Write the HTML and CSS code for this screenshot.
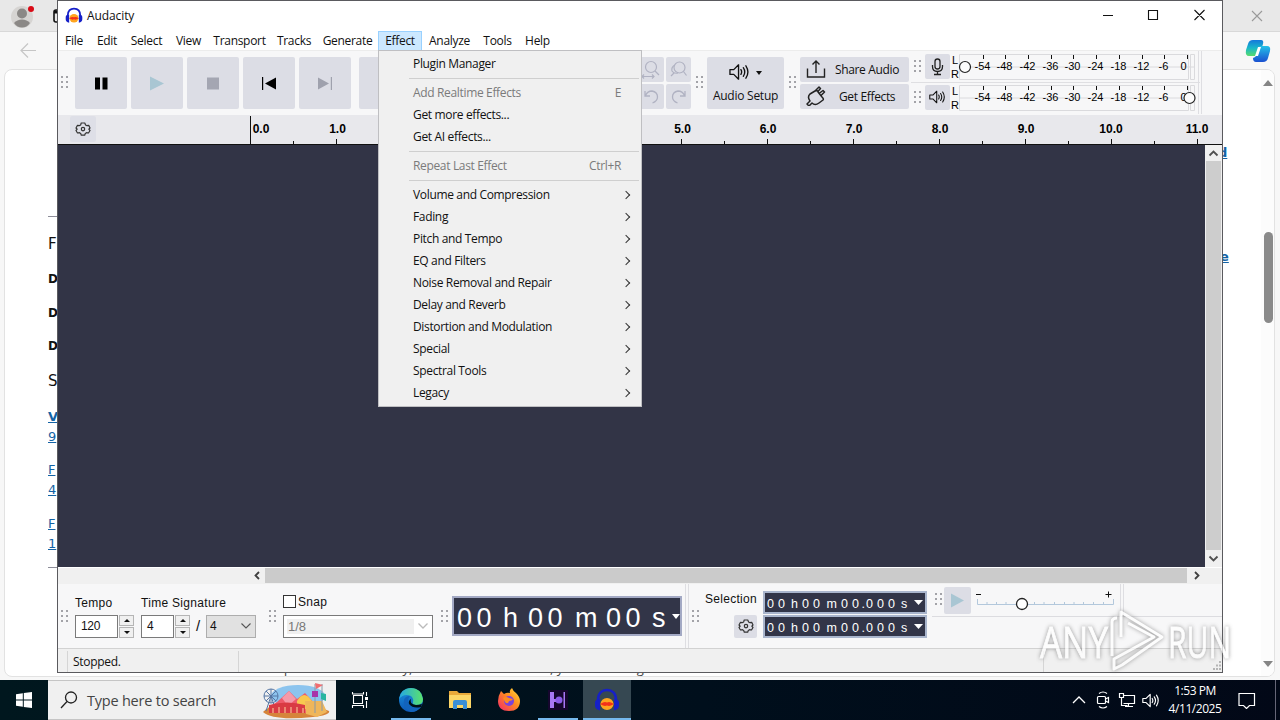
FILE: index.html
```html
<!DOCTYPE html>
<html lang="en">
<head>
<meta charset="utf-8">
<title>Audacity</title>
<link rel="stylesheet" href="styles.css">
</head>
<body>
<svg class="defs" width="0" height="0">
  <defs>
    <symbol id="grip" viewBox="0 0 8 13"><path d="M0 0h2v2H0zM5 0h2v2H5zM0 5h2v2H0zM5 5h2v2H5zM0 10h2v2H0zM5 10h2v2H5z" fill="#a3a3a8"/></symbol>
    <symbol id="gear" viewBox="0 0 16 16"><path d="M6.200 2h3.600l.7 1.900 1.200.7 2-.3L15 7l-1.200 1.200L15 9.500l-1.500 2.500-2-.3-1.200.7-.6 1.800H6.300l-.6-1.800-1.200-.7-2 .3L1 9.500l1.200-1.300L1 7l1.500-2.700 2 .3 1.200-.7z" fill="none" stroke="#333" stroke-width="1.200" stroke-linejoin="round"/><circle cx="8" cy="8.100" r="1.700" fill="none" stroke="#333" stroke-width="1.200"/></symbol>
    <symbol id="speaker" viewBox="0 0 22 18"><path d="M1 6.500h4l5-5v15l-5-5H1z" fill="none" stroke="currentColor" stroke-width="1.400" stroke-linejoin="round"/><path d="M12.500 6.500q1.500 2.500 0 5M15 4.500q3 4.500 0 9M17.700 2.500q4.200 6.500 0 13" fill="none" stroke="currentColor" stroke-width="1.400" stroke-linecap="round"/></symbol>
    <symbol id="phones" viewBox="0 0 26 24"><ellipse cx="13" cy="16" rx="6.500" ry="6" fill="#ffa51f"/><path d="M6 16l3-1.500 2-.5 2 .5 2-.5 2 .5 3 1.500-3 1.500-2 .5-2-.5-2 .5-2-.5z" fill="#f4301b"/><path d="M4 17V12C4 5 8 2 13 2s9 3 9 10v5" fill="none" stroke="#1620c8" stroke-width="2.600"/><path d="M1 14.500q0-3.500 5-3.500v11.500q-5-1-5-5zM25 14.500q0-3.500-5-3.500v11.500q5-1 5-5z" fill="#1620c8"/></symbol>
    <linearGradient id="edgeA" x1="0" y1="0" x2="1" y2="0"><stop offset="0" stop-color="#24a6e4"/><stop offset="1" stop-color="#5be36c"/></linearGradient>
    <linearGradient id="edgeB" x1="0" y1="0" x2="0" y2="1"><stop offset="0" stop-color="#1b94dc"/><stop offset="1" stop-color="#0c58b8"/></linearGradient>
    <linearGradient id="fox" x1="1" y1="0" x2="0" y2="1"><stop offset="0" stop-color="#ffe23c"/><stop offset=".45" stop-color="#ff8a20"/><stop offset="1" stop-color="#f4266c"/></linearGradient>
    <linearGradient id="copA" x1="0" y1="0" x2="0" y2="1"><stop offset="0" stop-color="#1478dc"/><stop offset=".5" stop-color="#19b7c9"/><stop offset="1" stop-color="#58dc6c"/></linearGradient>
    <linearGradient id="copB" x1="0" y1="0" x2="0" y2="1"><stop offset="0" stop-color="#24c1e8"/><stop offset="1" stop-color="#1a50d0"/></linearGradient>
  </defs>
</svg>
<div class="desktop">

  <section class="browser">
    <header class="tabstrip">
      <svg class="avatar" width="26" height="26" viewBox="0 0 26 26"><circle cx="11" cy="14" r="11" fill="#d6d4d2"/><circle cx="11" cy="10.500" r="5" fill="#8b8886"/><path d="M3 20q3-3.500 8-3.500t8 3.500q-3 4.500-8 4.500T3 20z" fill="#8b8886"/><circle cx="20" cy="6" r="3" fill="#d90b17"/></svg>
      <svg class="tabicon" width="14" height="14" viewBox="0 0 14 14"><rect x="1" y="1" width="12" height="12" rx="2" fill="none" stroke="#111" stroke-width="1.600"/><path d="M1 3h12" stroke="#111" stroke-width="3"/></svg>
      <svg class="tabclose" width="12" height="12" viewBox="0 0 12 12"><path d="M1 1l10 10M11 1L1 11" stroke="#9a9a9a" stroke-width="1.100"/></svg>
    </header>
    <div class="navbar">
      <svg width="18" height="16" viewBox="0 0 18 16"><path d="M16 7.500H1M8 .5l-7 7 7 7" fill="none" stroke="#c6c6c6" stroke-width="1.200"/></svg>
      <svg class="copilot" width="26" height="24" viewBox="0 0 26 24"><path d="M8 1h8q3 0 2 4l-3 9q-1 3-4 3H4q-4 0-3-6l2-6q1-4 5-4z" fill="url(#copA)"/><path d="M15 7h7q4 0 3 5l-2 7q-1 4-5 4h-7q-3 0-3-4 3-1 4-4l2-6q.5-2 1-2z" fill="url(#copB)"/><path d="M13 8h3l-3 9h-3z" fill="#fff"/></svg>
    </div>
    <div class="page">
      <div class="article">
        <hr>
        <p class="h f1">F</p><p class="d">D</p><p class="d">D</p><p class="d">D</p><p class="h s1">S</p>
        <a class="bold">V</a><a>9</a><a class="gap">F</a><a>4</a><a class="gap">F</a><a>1</a>
        <hr class="end">
      </div>
      <div class="aside"><a>d</a><a>e</a></div>
      <div class="scroll"><i class="up"></i><i class="thumb"></i><i class="down"></i></div>
      <p class="cut">offline or quicker automatically, wisdeoutlid installs on, you're missing und</p>
    </div>
  </section>

  <section class="window">
    <header class="title">
      <svg width="18" height="17"><use href="#phones"/></svg>
      <span>Audacity</span>
      <svg class="controls" width="104" height="14" viewBox="0 0 104 14"><path d="M0 7.500h10M45.500 2.500h9v9h-9zM91.500 2l10 10M101.500 2l-10 10" fill="none" stroke="#111" stroke-width="1.100"/></svg>
    </header>
    <nav class="menubar"><span>File</span><span>Edit</span><span>Select</span><span>View</span><span>Transport</span><span>Tracks</span><span>Generate</span><span class="active">Effect</span><span>Analyze</span><span>Tools</span><span>Help</span></nav>

    <div class="toolbar">
      <svg class="grip"><use href="#grip"/></svg>
      <div class="transport">
        <b class="btn"><svg width="52" height="52"><path d="M20 20.500h5v12h-5zM27.500 20.500h5v12h-5z"/></svg></b>
        <b class="btn"><svg width="52" height="52"><path d="M19 19.500l14 7-14 7z" fill="#a9c6d3"/></svg></b>
        <b class="btn"><svg width="52" height="52"><path d="M20 20.500h12v12H20z" fill="#a4a6b2"/></svg></b>
        <b class="btn"><svg width="52" height="52"><path d="M19 20h1.200v13H19zM33 20.500v12l-11-6z"/></svg></b>
        <b class="btn"><svg width="52" height="52" fill="#9fa1ad"><path d="M19 20.500v12l11-6zM31.800 20h1.200v13h-1.200z"/></svg></b>
      </div>
      <b class="btn"></b><b class="btn"></b>
      <div class="tools">
        <b class="small"><svg width="25" height="25"><g fill="none" stroke="#b0b2c2" stroke-width="1.200"><circle cx="12" cy="10" r="5.500"/><path d="M16 14l4 4M3 19.500h12M5 17.500l-2 2 2 2M13 17.500l2 2-2 2"/></g></svg></b>
        <b class="small"><svg width="25" height="25"><g fill="none" stroke="#b0b2c2" stroke-width="1.200"><circle cx="13.500" cy="10.500" r="5.500"/><path d="M17.500 14.500l3 4M9 8q-4 2-3 6 2 3 6 2M8 16l-3 3"/></g></svg></b>
        <b class="small"><svg width="25" height="25"><path d="M6 7v5h5M6.500 11.500q2-4.500 6.500-4.500 5.500 1 5.500 6 0 4-5 6" fill="none" stroke="#b0b2c2" stroke-width="1.300"/></svg></b>
        <b class="small"><svg width="25" height="25"><path d="M19 7v5h-5M18.500 11.500q-2-4.500-6.500-4.500-5.500 1-5.500 6 0 4 5 6" fill="none" stroke="#b0b2c2" stroke-width="1.300"/></svg></b>
      </div>
      <svg class="grip"><use href="#grip"/></svg>
      <div class="setup">
        <div><svg width="21" height="18"><use href="#speaker"/></svg><i></i></div>
        <span>Audio Setup</span>
      </div>
      <svg class="grip"><use href="#grip"/></svg>
      <div class="share">
        <div><svg width="20" height="20" viewBox="0 0 20 20"><path d="M1.500 9.500v8.500h17V9.500M10 14V2M6.500 5.500L10 2l3.500 3.500" fill="none" stroke="#222" stroke-width="1.400"/></svg><span>Share Audio</span></div>
        <div><svg width="20" height="20" viewBox="0 0 20 20"><path d="M1 18l3-3q-3-4 0-7l5-3q3-1 3 1l4 5q2 2 1 3l-4 3q-4 3-7 0l-3 3zM9 5l4-4 1.500 1.500-3 3.500M14.500 10l4-4L17 4.500l-4 3" fill="none" stroke="#222" stroke-width="1.500" stroke-linejoin="round"/></svg><span class="fx">Get Effects</span></div>
      </div>
      <div class="meters">
        <div class="meter">
          <svg class="grip"><use href="#grip"/></svg>
          <b class="small"><svg width="25" height="25" fill="none" stroke="#222" stroke-width="1.300"><rect x="10" y="5" width="5" height="10" rx="2.500"/><path d="M7.500 11v1.500q0 5 5 5t5-5V11M12.500 17.500V20M9 20.500h7"/></svg></b>
          <svg class="scale" width="252" height="26" viewBox="950 54 252 26">
            <path d="M959.500 54.500h229v25h-229zM959 67h236M1190.500 54.500h4v25h-4z" fill="none" stroke="#dadadd"/>
            <path d="M983.500 55v4M1005.500 55v4M1028.500 55v4M1051.500 55v4M1073.500 55v4M1096.500 55v4M1119.500 55v4M1142.500 55v4M1164.500 55v4M1187.500 55v4" stroke="#111"/>
            <text x="952" y="64">L</text><text x="951" y="78">R</text>
            <g text-anchor="middle"><text x="982.500" y="70">-54</text><text x="1004.500" y="70">-48</text><text x="1027.500" y="70">-42</text><text x="1050.500" y="70">-36</text><text x="1072.500" y="70">-30</text><text x="1095.500" y="70">-24</text><text x="1118.500" y="70">-18</text><text x="1141.500" y="70">-12</text><text x="1163.500" y="70">-6</text><text x="1183.500" y="70">0</text></g>
            <circle cx="965" cy="67" r="5.500" fill="#fcfcfc" stroke="#222" stroke-width="1.200"/>
          </svg>
        </div>
        <div class="meter">
          <svg class="grip"><use href="#grip"/></svg>
          <b class="small"><svg width="17" height="14"><use href="#speaker"/></svg></b>
          <svg class="scale" width="252" height="26" viewBox="950 54 252 26">
            <path d="M959.500 54.500h229v25h-229zM959 67h236M1190.500 54.500h4v25h-4z" fill="none" stroke="#dadadd"/>
            <path d="M983.500 55v4M1005.500 55v4M1028.500 55v4M1051.500 55v4M1073.500 55v4M1096.500 55v4M1119.500 55v4M1142.500 55v4M1164.500 55v4M1187.500 55v4" stroke="#111"/>
            <text x="952" y="64">L</text><text x="951" y="78">R</text>
            <g text-anchor="middle"><text x="982.500" y="70">-54</text><text x="1004.500" y="70">-48</text><text x="1027.500" y="70">-42</text><text x="1050.500" y="70">-36</text><text x="1072.500" y="70">-30</text><text x="1095.500" y="70">-24</text><text x="1118.500" y="70">-18</text><text x="1141.500" y="70">-12</text><text x="1163.500" y="70">-6</text><text x="1183.500" y="70">0</text></g>
            <circle cx="1189.500" cy="67" r="5.500" fill="#fcfcfc" stroke="#222" stroke-width="1.200"/>
          </svg>
        </div>
      </div>
      <i class="dock"></i>
    </div>

    <div class="ruler">
      <b class="small"><svg width="16" height="16"><use href="#gear"/></svg></b>
      <svg class="ticks" width="972" height="29" viewBox="250 115 972 29">
        <path d="M250.500 116v28M336.500 139v5M422.500 139v5M508.500 139v5M594.500 139v5M681.500 139v5M767.500 139v5M853.500 139v5M939.500 139v5M1025.500 139v5M1111.500 139v5M1197.500 139v5M293.500 141v3M379.500 141v3M465.500 141v3M551.500 141v3M638.500 141v3M724.500 141v3M810.500 141v3M896.500 141v3M982.500 141v3M1068.500 141v3M1154.500 141v3" stroke="#111"/>
        <text x="261" y="133">0.0</text><text x="337.500" y="133">1.0</text><text x="682.500" y="133">5.0</text><text x="768" y="133">6.0</text><text x="854" y="133">7.0</text><text x="940" y="133">8.0</text><text x="1026" y="133">9.0</text><text x="1111" y="133">10.0</text><text x="1197" y="133">11.0</text>
      </svg>
    </div>

    <div class="tracks">
      <div class="canvas"></div>
      <div class="vscroll">
        <svg width="17" height="16"><path d="M4.500 10.500l4-4 4 4" fill="none" stroke="#505050" stroke-width="1.800"/></svg>
        <i></i>
        <svg width="17" height="17"><path d="M4.500 6.500l4 4 4-4" fill="none" stroke="#505050" stroke-width="1.800"/></svg>
      </div>
    </div>
    <div class="hscroll">
      <svg width="17" height="16"><path d="M11 4l-3.500 3.500L11 11" fill="none" stroke="#404040" stroke-width="1.800"/></svg>
      <i></i>
      <svg width="17" height="16"><path d="M8 4l3.500 3.500L8 11" fill="none" stroke="#404040" stroke-width="1.800"/></svg>
    </div>

    <div class="lower">
      <svg class="grip"><use href="#grip"/></svg>
      <div class="field tempo"><label>Tempo</label><div><span class="num">120</span><span class="spin"><i class="inc"></i><i class="dec"></i></span></div></div>
      <div class="field sig"><label>Time Signature</label><div><span class="num">4</span><span class="spin"><i class="inc"></i><i class="dec"></i></span><em>/</em><span class="select">4<svg width="10" height="6"><path d="M.5 .5l4.500 4.500 4.500-4.500" fill="none" stroke="#555" stroke-width="1.100"/></svg></span></div></div>
      <svg class="grip"><use href="#grip"/></svg>
      <div class="field snap"><label><i></i>Snap</label><div><span class="combo"><span>1/8</span><svg width="10" height="6"><path d="M.5 .5l4.500 4.500 4.500-4.500" fill="none" stroke="#bbb" stroke-width="1.300"/></svg></span></div></div>
      <svg class="grip"><use href="#grip"/></svg>
      <svg class="bigtime" width="230" height="40" viewBox="452 596 230 40"><rect x="453" y="597" width="228" height="38" fill="#323548" stroke="#a3a9c4" stroke-width="2"/><text y="627" x="457 476.500 490 503 517 528 547.500 560 575 600 606 625.500 642 652">00 h 00 m 00 s</text><path d="M672 614h8l-4 5z" fill="#fff"/></svg>
      <i class="dock"></i>
      <svg class="grip"><use href="#grip"/></svg>
      <div class="selcol"><label>Selection</label><b class="small"><svg width="16" height="16"><use href="#gear"/></svg></b></div>
      <div class="times">
        <svg width="164" height="23" viewBox="763 590 164 23"><rect x="764" y="591" width="162" height="21" fill="#323548" stroke="#a9b5cc" stroke-width="2"/><text y="606.500" x="767 778 786 791 798 802 813 821 826.500 838 841 852 861.500 866 877 888 896 901">00 h 00 m 00.000 s</text><path d="M914 599h9l-4.500 5z" fill="#fff"/></svg>
        <svg width="164" height="23" viewBox="763 590 164 23"><rect x="764" y="591" width="162" height="21" fill="#323548" stroke="#a9b5cc" stroke-width="2"/><text y="606.500" x="767 778 786 791 798 802 813 821 826.500 838 841 852 861.500 866 877 888 896 901">00 h 00 m 00.000 s</text><path d="M914 599h9l-4.500 5z" fill="#fff"/></svg>
      </div>
      <div class="speed">
        <svg class="grip"><use href="#grip"/></svg>
        <b class="small"><svg width="27" height="27"><path d="M7 6.500l13 7-13 7z" fill="#a9c6d3"/></svg></b>
        <svg width="141" height="26" viewBox="975 587 141 26"><path d="M976 594.500h5M1105.500 594.500h6M1108.500 591.500v6" stroke="#111"/><path d="M977.500 599v5.500h136V599M987 602v2M996.500 602v2M1006 602v2M1034.500 602v2M1044 602v2M1054.500 602v2M1064.500 602v2M1074 602v2M1083.500 602v2M1093.500 602v2M1103.500 602v2" fill="none" stroke="#b3c8dc"/><circle cx="1022" cy="604" r="5.500" fill="#fff" stroke="#222" stroke-width="1.300"/></svg>
        <i class="dock"></i>
      </div>
    </div>

    <footer class="status"><i></i><span>Stopped.</span><i class="mid"></i><svg width="10" height="10"><path d="M7 0h2v2H7zM4 3.500h2v2H4zM7 3.500h2v2H7zM1 7h2v2H1zM4 7h2v2H4zM7 7h2v2H7z" fill="#b5b5b5"/></svg></footer>
  </section>

  <section class="menu">
    <div>Plugin Manager</div><hr>
    <div class="off">Add Realtime Effects<kbd>E</kbd></div><div>Get more effects...</div><div>Get AI effects...</div><hr>
    <div class="off">Repeat Last Effect<kbd>Ctrl+R</kbd></div><hr>
    <div class="sub">Volume and Compression</div><div class="sub">Fading</div><div class="sub">Pitch and Tempo</div><div class="sub">EQ and Filters</div><div class="sub">Noise Removal and Repair</div><div class="sub">Delay and Reverb</div><div class="sub">Distortion and Modulation</div><div class="sub">Special</div><div class="sub">Spectral Tools</div><div class="sub">Legacy</div>
  </section>

  <svg class="watermark" width="224" height="72" viewBox="1036 604 224 72">
    <g class="mark"><text x="1040" y="658" textLength="68" lengthAdjust="spacingAndGlyphs">ANY</text><text x="1168" y="658" textLength="63" lengthAdjust="spacingAndGlyphs">RUN</text><path d="M1112 656v-34q0-4 5-4M1121 637v-25l41 25-40 28-8 4v-10l40-22-26-14" fill="none" stroke="#fff" stroke-width="3" stroke-linejoin="round"/></g>
  </svg>

  <footer class="taskbar">
    <div class="start"><svg width="16" height="16"><path d="M0 2.300l6.800-1v6.200H0zM7.800 1.100L16 0v7.500H7.800zM0 8.500h6.800v6.200L0 13.700zM7.800 8.500H16V16l-8.200-1.100z" fill="#fff"/></svg></div>
    <div class="search">
      <svg width="18" height="18"><circle cx="11" cy="6.500" r="5.500" fill="none" stroke="#222" stroke-width="1.300"/><path d="M7 10.500L1 17" stroke="#222" stroke-width="1.300"/></svg>
      <span>Type here to search</span>
      <svg class="fair" width="72" height="38" viewBox="0 0 72 38"><ellipse cx="38" cy="15" rx="27" ry="11" fill="#8cc4ee"/><path d="M3 31q5-6 14-6h40l12 5q2 4-16 6-40 4-50-5z" fill="#d6843a"/><g fill="none" stroke="#5576a4"><circle cx="11" cy="15" r="7"/><path d="M4 15h14M11 8v14M6 10l10 10M16 10L6 20M11 15L6 30M11 15l5 15"/></g><path d="M17 21l12-11 8 8 8-6 12 13v7H10v-7z" fill="#ee5b6b"/><path d="M22 17l7-7 7 8-8 7z" fill="#f59aa9"/><path d="M37 20q7-12 15 0v8H37z" fill="#f8c850"/><path d="M9 24q18-5 36 0v8H9z" fill="#d93a43"/><path d="M13 27v5M19 26v6M25 26v6M31 26v6M37 26v6M43 27v5" stroke="#f4b08a" stroke-width="1.300"/><path d="M45 20h17l5 11-10 5-11-3z" fill="#efb65a"/><path d="M55 3v29M62 3v27" stroke="#8899a8"/><path d="M55 2l8 2-7 4z" fill="#f06c70"/><path d="M52 10h6v6h-6z" fill="#a832a8"/><path d="M61 12l5 1v7l-5-2z" fill="#28b5a0"/></svg>
    </div>
    <div class="apps">
      <div><svg width="18" height="18"><path d="M2.500 4.500h9v8h-9zM1.500 1v2h11V1M1.500 17v-2.500h11V17M15.500 1v4M15.500 10v7" fill="none" stroke="#fff" stroke-width="1.100"/><path d="M14 6h3v3h-3z" fill="#fff"/></svg></div>
      <div class="run"><svg width="24" height="24"><circle cx="12" cy="12" r="12" fill="url(#edgeB)"/><path d="M0 11Q2 0 12 0t12 11q0 6-7 6-4 0-3-3 1-3-2-6Q5 5 0 11z" fill="url(#edgeA)"/><path d="M9 13q0 9 13 6-4 5-10 5Q3 20 5 12q1-4 6-4-2 2-2 5z" fill="#1263bc"/><path d="M12 11q-2 5 5 6 3 0 6-1l-1 3q-8 2-12-3-1-3 2-5z" fill="#001018"/></svg></div>
      <div><svg width="22" height="20"><path d="M0 1h8l2 2h12v15H0z" fill="#e9a93a"/><path d="M0 5h22v13H0z" fill="#fcd667"/><path d="M4 19v-7q0-2 2-2h10q2 0 2 2v7h-4v-4H8v4z" fill="#3b8fd6"/></svg></div>
      <div><svg width="24" height="24"><path d="M4 3l3 3q3-2 6-1-1-3 2-5 1 3 4 5 4 4 4 8 0 10-11 10T1 13q0-5 3-10z" fill="url(#fox)"/><circle cx="12" cy="13" r="5" fill="#7b43dc"/><path d="M6 10q3-2 6 0l4 1q-1 2-4 2-1 4-4 1z" fill="#ff8a20"/></svg></div>
      <div class="run"><svg width="20" height="20"><path d="M0 0h20v20H0z" fill="#16062e"/><path d="M2 2h4v16H2zM15.500 2h1.500v16h-1.500zM6 9h3v3H6z" fill="#a877f4"/><circle cx="11" cy="10" r="3.500" fill="#8a5ae8"/></svg></div>
      <div class="run current"><svg width="26" height="24"><use href="#phones"/></svg></div>
    </div>
    <div class="tray">
      <svg width="14" height="8"><path d="M1 7l6-6 6 6" fill="none" stroke="#fff" stroke-width="1.300"/></svg>
      <svg width="14" height="18" fill="none" stroke="#fff" stroke-width="1.200"><rect x="1.500" y="5.500" width="8" height="7" rx="1"/><path d="M9.500 8l3-1.500v5l-3-1.500M3 2.500q4-3 8 0M3 15.500q4 3 8 0"/></svg>
      <svg width="18" height="16" fill="none" stroke="#fff" stroke-width="1.200"><path d="M5 3.500h11.500v8H5.500M1.500 1.500h4v4h-4zM3.500 5.500v8h6M10.500 11.500v3M7 14.500h8"/></svg>
      <svg class="vol" width="18" height="15"><use href="#speaker"/></svg>
      <div class="clock"><span>1:53 PM</span><span>4/11/2025</span></div>
      <svg class="note" width="18" height="17"><path d="M1 1.500h15.500v12h-5l-3 3-3-3H1z" fill="none" stroke="#fff" stroke-width="1.200"/></svg>
      <i></i>
    </div>
  </footer>
</div>
</body>
</html>
```
FILE: styles.css
```css
* { box-sizing: border-box; }
body { margin: 0; overflow: hidden; font: 12px/16px "Open Sans", sans-serif; color: #111; }
svg { display: block; flex: none; }
i { font-style: normal; }
.defs { position: absolute; }
.desktop { position: relative; width: 1280px; height: 720px; overflow: hidden; background: #f7f7f7; }

/* browser behind */
.browser { position: absolute; inset: 0 0 40px; display: flex; flex-direction: column; }
.tabstrip { display: flex; align-items: center; height: 32px; padding: 0 17px 0 11px; background: #e8e8e8; border-bottom: 1px solid #d8d8d8; }
.tabicon { margin-left: 16px; }
.tabclose { margin-left: auto; }
.navbar { display: flex; align-items: center; justify-content: space-between; height: 37px; padding: 0 9px 0 20px; }
.page { display: grid; grid-template-columns: 1213px 47px 1fr; grid-template-rows: 592px 14px; margin: 0 5px 3px 4px; height: 608px; background: #fff; border: 1px solid #e2e2e2; border-radius: 8px; overflow: hidden; }
.article { padding: 146px 0 0 43px; font-family: "DejaVu Sans", sans-serif; }
.article hr { width: 12px; height: 1px; margin: 0; border: 0; background: #8d8d99; }
.article p { margin: 0; line-height: 18px; }
.article .h { font-size: 15px; }
.article .f1 { margin: 18px 0 9px; }
.article .d { font-size: 12px; font-weight: bold; height: 33.500px; line-height: 34px; }
.article .s1 { margin: 9px 0 17px; font-weight: 500; }
.article a { display: block; height: 20px; font-size: 13px; line-height: 20px; color: #1363a5; text-decoration: underline; }
.article .bold { font-weight: bold; }
.article .gap { margin-top: 13.500px; }
.article .end { margin-top: 13px; }
.aside { padding-top: 73px; font: bold 13px/20px "DejaVu Sans", sans-serif; }
.aside a { display: block; color: #1363a5; text-decoration: underline; margin-bottom: 84px; }
.aside a:last-child { padding-left: 2px; }
.scroll { display: flex; flex-direction: column; align-items: center; width: 14px; padding: 10px 0 9px; grid-row: 1 / 3; grid-column: 3; margin-left: -4px; background: #fcfcfc; }
.up { border: 5px solid transparent; border-top: 0; border-bottom: 6px solid #858585; }
.down { margin-top: auto; border: 5px solid transparent; border-bottom: 0; border-top: 6px solid #858585; }
.thumb { width: 9px; height: 91px; margin-top: 146px; border-radius: 5px; background: #8a8a8a; }
.cut { grid-column: 1; grid-row: 2; margin: 0 0 0 216px; height: 14px; font-size: 13px; line-height: 13px; white-space: nowrap; color: #444; }

/* application window */
.window { position: absolute; left: 57px; top: 0; width: 1166px; height: 673px; display: flex; flex-direction: column; border: 1px solid #5a5a5e; background: #f7f7f8; }
.title { display: flex; align-items: center; height: 30px; padding: 0 15px 2px 7px; background: #fff; }
.title span { margin: 2px 0 0 4px; letter-spacing: -.1px; }
.controls { margin-left: auto; }
.menubar { display: grid; grid-template-columns: 32px 34px 45px 39px 63px 46px 61px 44px 55px 41px 39px; height: 19px; background: #fff; text-align: center; line-height: 20px; letter-spacing: -.3px; white-space: nowrap; }
.menubar .active { background: #cce8ff; box-shadow: inset 0 0 0 1px #99d1ff; }
.toolbar { display: flex; align-items: center; height: 65px; padding: 0 0 1px 3px; border-top: 1px solid #ececec; }
.grip { width: 8px; height: 13px; }
.btn, .small { display: flex; flex: none; align-items: center; justify-content: center; background: #dcdde5; border-radius: 2px; }
.btn { width: 52px; height: 52px; }
.small { width: 25px; height: 25px; }
.transport { display: flex; gap: 4px; margin: 0 8px 0 6px; }
.transport + .btn { margin-right: 4px; }
.tools { display: grid; grid-template-columns: 25px 25px; gap: 2px 2px; margin: 0 5px 0 172px; }
.setup { width: 77px; height: 52px; margin: 0 5px 0 3px; background: #dcdde5; border-radius: 2px; display: flex; flex-direction: column; align-items: center; justify-content: space-between; padding: 6px 0 5px; letter-spacing: -.25px; white-space: nowrap; }
.setup div { display: flex; align-items: center; gap: 6px; }
.setup i { border: 3px solid transparent; border-bottom: 0; border-top: 4px solid #111; margin-top: 2px; }
.share { display: grid; gap: 2px; margin: 0 2px 0 3px; width: 109px; }
.share div { display: flex; align-items: center; gap: 9px; height: 25px; padding-left: 6px; background: #dcdde5; border-radius: 2px; white-space: nowrap; letter-spacing: -.35px; }
.share span { padding-top: 2px; }
.share .fx { padding-left: 4px; }
.meters { width: 289px; height: 64px; }
.meter { display: flex; height: 32px; padding: 3px 0 0 3px; border-bottom: 1px solid #dfdfe2; }
.meter:last-child { border: 0; padding-top: 2px; }
.meter .grip { margin: 6px 3px 0 0; }
.scale text { font: 11px "Liberation Sans", sans-serif; }
.dock { align-self: stretch; width: 4px; border: 1px solid #dedee2; border-width: 0 1px; }
.toolbar .dock { margin-left: -2px; }
.ruler { display: flex; justify-content: space-between; height: 30px; padding: 1px 0 0 12px; background: #e8e8ec; border-bottom: 1px solid #111; }
.ruler .small { width: 26px; height: 26px; background: #dedfe7; }
.ticks { margin-top: -1px; }
.ticks text { font: bold 12px "Liberation Sans", sans-serif; text-anchor: middle; }
.tracks { display: flex; height: 422px; }
.canvas { flex: 1; background: #323446; }
.vscroll { width: 17px; display: flex; flex-direction: column; background: #f0f0f0; }
.vscroll i { flex: 1; width: 15px; margin-left: 1px; background: #cdcdcd; }
.hscroll { display: flex; height: 17px; padding: 0 18px 0 190px; background: #f0f0f0; border-top: 1px solid #fff; }
.hscroll i { flex: 1; height: 15px; background: #cbcbcb; }

/* lower toolbars */
.lower { display: flex; align-items: center; height: 64px; padding-left: 3px; font-family: "Liberation Sans", sans-serif; }
.field { height: 43px; }
.field label, .selcol label { display: flex; align-items: center; height: 16px; letter-spacing: .3px; white-space: nowrap; }
.field > div { display: flex; height: 23px; margin-top: 4px; }
.tempo { width: 60px; margin: 0 6px; }
.sig { width: 115px; margin-right: 13px; }
.num { width: 43px; padding-left: 5px; line-height: 20px; letter-spacing: -.3px; background: #fff; border: 1px solid #7a7a7a; }
.sig .num { width: 33px; }
.spin { display: grid; grid-template-rows: 11px 11px; gap: 1px; width: 15px; margin-left: 1px; }
.spin i { display: flex; align-items: center; justify-content: center; border: 1px solid #b5b5b5; background: #f0f0f0; }
.spin i::after { content: ""; border: 3px solid transparent; }
.inc::after { border-top: 0 !important; border-bottom-color: #111 !important; }
.dec::after { border-bottom: 0 !important; border-top-color: #111 !important; }
.field em { width: 16px; text-align: center; font: 15px/21px "Liberation Sans", sans-serif; }
.select { display: flex; align-items: center; justify-content: space-between; width: 50px; padding: 0 4px 0 3px; background: #e1e1e1; border: 1px solid #adadad; }
.snap { width: 150px; margin: 0 8px 0 6px; }
.field.snap label { height: 14px; }
.snap label i { width: 13px; height: 13px; margin-right: 2px; border: 1px solid #333; background: #fff; }
.field.snap > div { margin-top: 6px; }
.combo { display: flex; align-items: center; width: 150px; padding: 3px 4px 3px 3px; justify-content: space-between; background: #fff; border: 1px solid #7a7a7a; }
.combo span { width: 127px; padding-left: 1px; line-height: 15px; font-size: 13px; color: #777; background: #f0f0f0; }
.bigtime { margin: 0 3px 0 3px; }
.bigtime text { font: 27px "Liberation Sans", sans-serif; fill: #fff; white-space: pre; }
.lower > .dock { margin-right: 3px; }
.selcol { display: flex; flex-direction: column; align-items: flex-end; gap: 8px; width: 51px; margin: -2px 6px 2px 6px; }
.selcol .small { width: 23px; height: 23px; }
.times { display: grid; gap: 1px; margin: -3px 5px 1px 0; }
.times text { font: 12.500px "Liberation Sans", sans-serif; fill: #fff; white-space: pre; }
.speed { display: flex; flex: 1; align-self: flex-start; height: 33px; padding: 3px 0 0 3px; border-bottom: 1px solid #dcdce0; }
.speed .grip { margin: 6px 1px 0 0; }
.speed .small { width: 27px; height: 27px; margin-right: 4px; }
.speed .dock { margin: -3px 0 0 4px; }
.status { display: flex; height: 24px; background: #f0f0f0; border-top: 1px solid #d2d2d2; padding-top: 2px; letter-spacing: -.3px; }
.status i { width: 10px; border-right: 1px solid #d5d5d5; }
.status span { width: 171px; padding-left: 5px; line-height: 22px; border-right: 1px solid #d5d5d5; }
.status .mid { width: 805px; }
.status svg { margin: 10px 0 0 auto; }

/* dropdown */
.menu { position: absolute; left: 378px; top: 50px; width: 264px; height: 357px; padding: 2px; background: #f0f0f0; border: 1px solid #bfbfc2; letter-spacing: -.34px; }
.menu div { display: flex; align-items: center; justify-content: space-between; height: 22px; padding: 0 18px 0 32px; white-space: nowrap; }
.menu hr { height: 1px; margin: 3px 0 3px 28px; border: 0; background: #cfcfcf; }
.menu .off { color: #7b7b7b; }
.menu kbd { font: inherit; }
.menu .sub { padding-right: 10px; }
.sub::after { content: ""; width: 5px; height: 5px; border: 1px solid #333; border-width: 1px 1px 0 0; transform: rotate(45deg); }

.watermark { position: absolute; left: 1036px; top: 604px; }
.mark { opacity: .75; filter: drop-shadow(0 0 2px #777); }
.mark text { font: 43px "Open Sans", sans-serif; fill: #fff; stroke: #fff; stroke-width: .8px; }

/* taskbar */
.taskbar { position: absolute; left: 0; top: 680px; width: 1280px; height: 40px; display: flex; background: linear-gradient(90deg, #00171e, #000f1c 55%, #020817); color: #fff; }
.start { display: flex; align-items: center; justify-content: center; width: 48px; }
.search { display: flex; align-items: center; width: 288px; padding: 0 4px 0 12px; background: #f0f0f0; border: 1px solid #c5c5c5; border-width: 1px 0; color: #444; }
.search span { margin: 2px 0 0 9px; font-size: 14.500px; letter-spacing: -.22px; white-space: nowrap; }
.fair { margin-left: auto; }
.apps { display: flex; }
.apps div { display: flex; align-items: center; justify-content: center; width: 49px; }
.apps .run { background: linear-gradient(#76b9ed, #76b9ed) 50% 100% / 40px 2px no-repeat; }
.apps .current { background: linear-gradient(#76b9ed, #76b9ed) 50% 100% / 48px 2px no-repeat, linear-gradient(#364852, #364852) 50% 0 / 48px 40px no-repeat; }
.apps div:first-child { width: 50px; padding-right: 2px; }
.tray { display: flex; align-items: center; margin-left: auto; }
.tray svg { margin-right: 10px; }
.tray svg:nth-child(2) { margin-right: 8px; }
.tray svg:nth-child(3) { margin-right: 6px; }
.clock { width: 62px; margin: 0 12px 0 -6px; text-align: center; line-height: 18px; letter-spacing: -.45px; white-space: nowrap; }
.clock span { display: block; }
.tray .note { margin-right: 19px; }
.tray > i { align-self: stretch; width: 5px; border-left: 1px solid #667; }
```
